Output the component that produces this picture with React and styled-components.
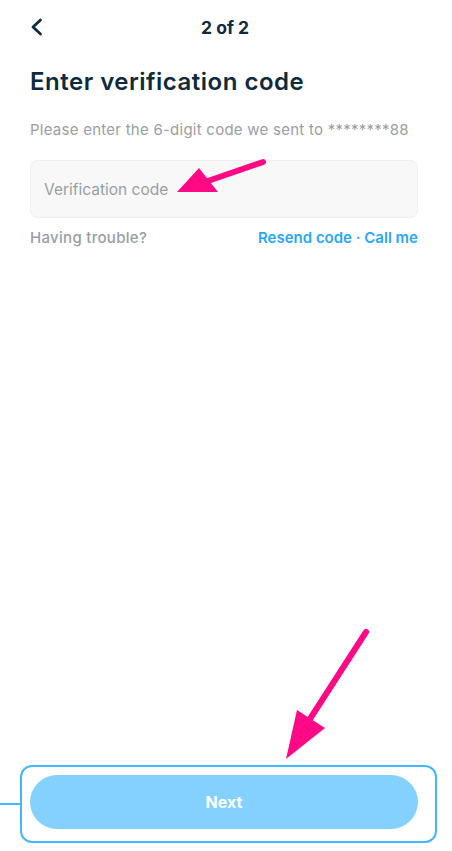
import React from 'react'
import styled, { createGlobalStyle } from 'styled-components'

const GlobalStyle = createGlobalStyle`
  * { box-sizing: border-box; }
  body {
    margin: 0;
    background: #fff;
    font-family: Inter, "Noto Sans", "Liberation Sans", sans-serif;
  }
`

const Screen = styled.div`
  position: relative;
  width: 452px;
  height: 851px;
  display: flex;
  flex-direction: column;
  padding: 0 34px 22px 30px;
  overflow: hidden;
`

const Header = styled.div`
  height: 54px;
  display: flex;
  align-items: center;
`

const BackButton = styled.button`
  border: 0;
  background: none;
  padding: 0;
  width: 14px;
  height: 20px;
  display: flex;
  align-items: center;
  color: #0e2a3c;
  cursor: pointer;
`

const Step = styled.div`
  flex: 1;
  text-align: center;
  font-size: 17.5px;
  font-weight: 700;
  color: #0e2a3c;
  margin-right: 14px;
  margin-left: 2px;
`

const Title = styled.h1`
  margin: 13px 0 0;
  font-size: 24px;
  line-height: 29px;
  font-weight: 600;
  letter-spacing: 0.5px;
  color: #0e2a3c;
`

const Hint = styled.p`
  margin: 25px 0 0;
  font-size: 15px;
  line-height: 18px;
  letter-spacing: 0.25px;
  color: #9a9ea2;
  white-space: nowrap;
`

const CodeInput = styled.input`
  margin-top: 21px;
  height: 58px;
  width: 100%;
  border: 1px solid #efefef;
  border-radius: 8px;
  background: #f8f8f8;
  padding: 0 13px;
  font-family: inherit;
  font-size: 15.5px;
  color: #0e2a3c;
  outline: none;
  &::placeholder { color: #9a9ea2; }
`

const HelpRow = styled.div`
  margin-top: 11px;
  display: flex;
  justify-content: space-between;
  font-size: 15px;
  line-height: 18px;
  font-weight: 500;
`

const Muted = styled.span`
  color: #9a9ea2;
  letter-spacing: 0.3px;
`

const Links = styled.span`
  color: #2aa7f1;
  font-weight: 600;
`

const Spacer = styled.div`
  flex: 1;
`

const NextButton = styled.button`
  height: 54px;
  width: 100%;
  border: 0;
  border-radius: 27px;
  background: #84d0fe;
  color: #fff;
  font-family: inherit;
  font-size: 16px;
  font-weight: 700;
`

const Frame = styled.div`
  position: absolute;
  left: 20px;
  top: 765px;
  width: 417px;
  height: 78px;
  border: 2px solid #45b6fb;
  border-radius: 12px;
  pointer-events: none;
  &::before {
    content: '';
    position: absolute;
    left: -22px;
    top: 36px;
    width: 20px;
    height: 2px;
    background: #45b6fb;
  }
`

const Overlay = styled.svg`
  position: absolute;
  left: 0;
  top: 0;
  pointer-events: none;
`

function Arrow({ x1, y1, x2, y2, head }) {
  return (
    <g>
      <line x1={x1} y1={y1} x2={x2} y2={y2} stroke="#ff0a84" strokeWidth="6" strokeLinecap="round" />
      <polygon points={head} fill="#ff0a84" />
    </g>
  )
}

export default function App() {
  return (
    <>
      <GlobalStyle />
      <Screen>
        <Header>
          <BackButton aria-label="Back">
            <svg width="13" height="18" viewBox="0 0 13 18">
              <path d="M10.5 2 L3 9 L10.5 16" fill="none" stroke="currentColor" strokeWidth="2.8" strokeLinecap="round" strokeLinejoin="round" />
            </svg>
          </BackButton>
          <Step>2 of 2</Step>
        </Header>
        <Title>Enter verification code</Title>
        <Hint>Please enter the 6-digit code we sent to ********88</Hint>
        <CodeInput placeholder="Verification code" />
        <HelpRow>
          <Muted>Having trouble?</Muted>
          <Links>Resend code · Call me</Links>
        </HelpRow>
        <Spacer />
        <NextButton>Next</NextButton>
        <Frame />
        <Overlay width="452" height="851">
          <Arrow x1={263} y1={162} x2={205} y2={182} head="177,192 199,168 218,192" />
          <Arrow x1={366} y1={632} x2={308} y2={722} head="286,759 297,710 325,728" />
        </Overlay>
      </Screen>
    </>
  )
}
